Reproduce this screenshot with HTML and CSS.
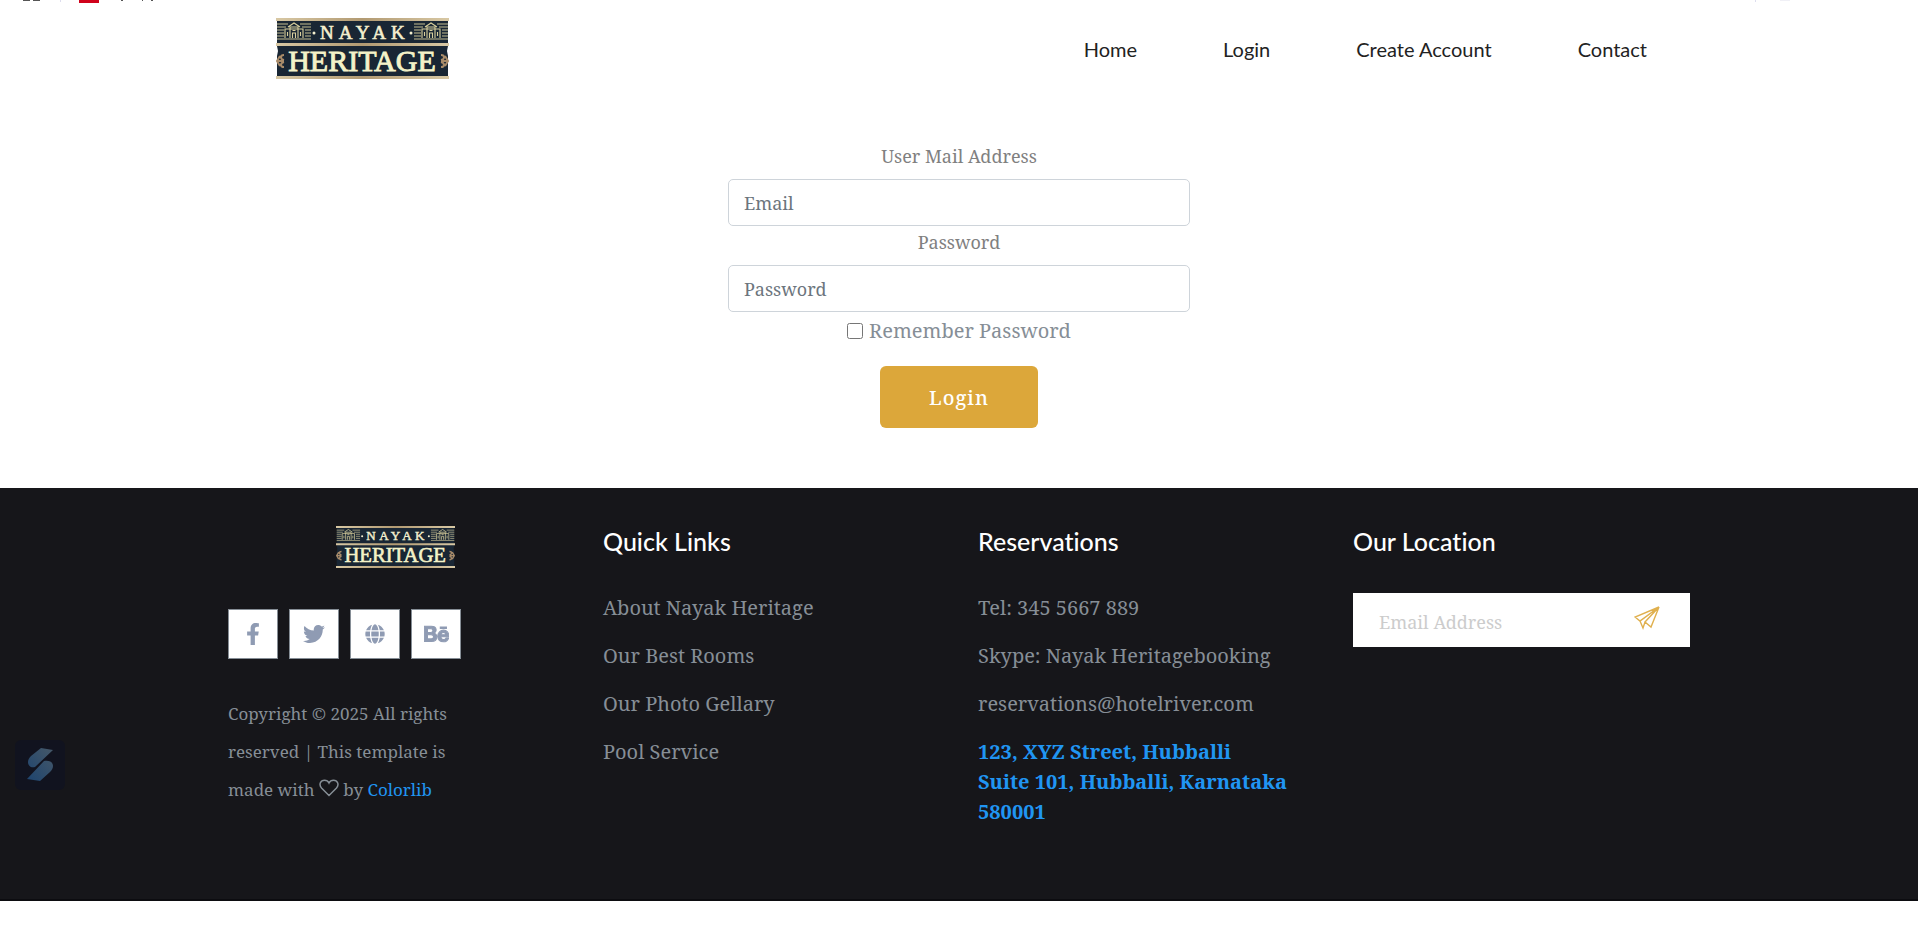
FILE: index.html
```html
<!DOCTYPE html>
<html lang="en">
<head>
<meta charset="utf-8">
<title>Nayak Heritage - Login</title>
<link rel="stylesheet" href="styles.css">
</head>
<body>
<svg class="strip" width="1800" height="4" viewBox="0 0 1800 4" aria-hidden="true">
  <path fill="#555" d="M23 0h7v1h-7zM33 0h7v1h-7zM121 0h2v1h-2zM142 0h1v1h-1zM151 0h2v1h-2z"/>
  <path fill="#dde" d="M60 0h1v2h-1zM1755 0h1v2h-1z"/>
  <path fill="#f0f0f6" d="M1780 0h10v1h-10z"/>
  <path fill="#d0021b" d="M79 0h20v3H79z"/>
</svg>
<svg width="0" height="0" class="defs" aria-hidden="true">
  <defs>
    <linearGradient id="gold" x1="0" x2="1"><stop offset="0" stop-color="#d8c8a4"/><stop offset=".5" stop-color="#b29a72"/><stop offset="1" stop-color="#d8c8a4"/></linearGradient>
    <g id="house" fill="none" stroke="#d9cf9c" stroke-width="1.1">
      <path d="M0 3h11M0 6h9M0 9h7M0 12h7M0 15h7M0 18h34M23 3h11M25 6h9M28 9h6M28 12h6M28 15h6" stroke-width=".9"/>
      <path d="M8 17V8h18v9M13 17V6h8v11M11 6l6-4 6 4M15.500 17v-5h3v5M15.500 9.500h3M10.500 11v4M23.500 11v4"/>
    </g>
    <g id="curl" fill="none" stroke="#a98b69" stroke-width="2">
      <path d="M8 1C4 1 4 5 8 6M8 13C4 13 4 9 8 8M4 2L1 7l3 5M1 7h7"/>
    </g>
    <symbol id="logo" viewBox="0 0 173 61">
      <path fill="#192634" d="M1 1h171v27l-1 5 1 5v22H1V38l1-5-1-5z"/>
      <path fill="url(#gold)" d="M0 0h173v3H0zM0 25h173v3H0zM0 58h173v3H0z"/>
      <use href="#house" x="1" y="3"/>
      <use href="#house" x="138" y="3"/>
      <use href="#curl" x="0" y="36"/>
      <use href="#curl" transform="translate(173 36) scale(-1 1)"/>
      <circle cx="38" cy="15" r="1.500" fill="#f4efcf"/><circle cx="135" cy="15" r="1.500" fill="#f4efcf"/>
      <text class="logo-top" x="44" y="21">NAYAK</text>
      <text class="logo-main" x="86" y="53" text-anchor="middle">HERITAGE</text>
    </symbol>
  </defs>
</svg>

<header class="header">
  <a class="brand" href="#" aria-label="Nayak Heritage"><svg viewBox="0 0 173 61"><use href="#logo"/></svg></a>
  <nav class="nav">
    <a href="#">Home</a>
    <a href="#">Login</a>
    <a href="#">Create Account</a>
    <a href="#">Contact</a>
  </nav>
</header>

<main>
  <form class="login">
    <label for="email">User Mail Address</label>
    <input class="field" id="email" type="email" placeholder="Email">
    <label for="password">Password</label>
    <input class="field" id="password" type="password" placeholder="Password">
    <div class="remember"><input type="checkbox" id="remember"><label for="remember">Remember Password</label></div>
    <button class="submit" type="button">Login</button>
  </form>
</main>

<footer class="footer">
  <div class="columns">
    <section class="about">
      <a class="foot-brand" href="#" aria-label="Nayak Heritage"><svg viewBox="0 0 173 61"><use href="#logo"/></svg></a>
      <div class="social">
        <a href="#" aria-label="Facebook"><svg width="14" height="22" viewBox="0 0 320 512"><path d="M279 288l14-93h-89v-60c0-25 12-50 52-50h41V7s-37-7-72-7c-73 0-121 44-121 125v70H23v93h81v224h100V288z"/></svg></a>
        <a href="#" aria-label="Twitter"><svg width="22" height="22" viewBox="0 0 512 512"><path d="M459.400 151.700c.3 4.500.3 9.100.3 13.600 0 138.700-105.600 298.600-298.600 298.600-59.500 0-114.700-17.200-161.100-47.100 8.400 1 16.600 1.300 25.300 1.300 49.100 0 94.200-16.600 130.300-44.800-46.100-1-84.800-31.200-98.100-72.800 6.500 1 13 1.600 19.800 1.600 9.400 0 18.800-1.300 27.600-3.600-48.100-9.700-84.100-52-84.100-103v-1.300c14 7.800 30.200 12.700 47.400 13.300-28.300-18.800-46.800-51-46.800-87.400 0-19.500 5.200-37.400 14.300-53 51.700 63.700 129.300 105.300 216.400 109.800-1.600-7.800-2.600-15.900-2.600-24 0-57.800 46.800-104.900 104.900-104.900 30.200 0 57.500 12.700 76.700 33.100 23.700-4.500 46.500-13.300 66.600-25.300-7.800 24.400-24.400 44.800-46.100 57.800 21.100-2.300 41.600-8.100 60.400-16.200-14.300 20.800-32.200 39.300-52.600 54.300z"/></svg></a>
        <a href="#" aria-label="Website"><svg width="20" height="20" viewBox="0 0 496 512"><path d="M336.500 160C322 70.700 287.800 8 248 8s-74 62.700-88.500 152h177zM152 256c0 22.200 1.200 43.500 3.300 64h185.300c2.100-20.500 3.300-41.800 3.300-64s-1.200-43.500-3.300-64H155.300c-2.100 20.500-3.300 41.800-3.300 64zm324.700-96c-28.600-67.900-86.500-120.400-158-141.600 24.400 33.800 41.200 84.700 50 141.600h108zM177.200 18.400C105.800 39.600 47.800 92.100 19.300 160h108c8.700-56.900 25.500-107.800 49.900-141.600zM487.400 192H372.700c2.100 21 3.300 42.500 3.300 64s-1.200 43-3.300 64h114.600c5.500-20.500 8.600-41.800 8.600-64s-3.100-43.500-8.500-64zM120 256c0-21.500 1.200-43 3.300-64H8.600C3.200 212.500 0 233.800 0 256s3.200 43.500 8.600 64h114.600c-2-21-3.200-42.500-3.200-64zm39.500 96c14.500 89.300 48.700 152 88.500 152s74-62.700 88.500-152h-177zm159.300 141.600c71.400-21.200 129.400-73.700 158-141.600h-108c-8.800 56.900-25.600 107.800-50 141.600zM19.300 352c28.600 67.900 86.500 120.400 158 141.600-24.400-33.800-41.200-84.700-50-141.600h-108z"/></svg></a>
        <a href="#" aria-label="Behance"><svg width="25" height="22" viewBox="0 0 576 512"><path stroke="#8f9bb3" stroke-width="24" d="M232 237.200c31.800-15.200 48.400-38.200 48.400-74 0-70.600-52.600-87.800-113.300-87.800H0v354.400h171.800c64.400 0 124.900-30.900 124.900-102.900 0-44.500-21.100-77.400-64.700-89.700zM77.900 135.900H151c28.100 0 53.400 7.900 53.400 40.500 0 30.100-19.700 42.200-47.500 42.200h-79v-82.700zm83.300 233.700H77.900V272h84.900c34.300 0 56 14.300 56 50.600 0 35.800-25.900 47-57.600 47zm358.500-240.700H376V94h143.700v34.900zM576 305.200c0-75.900-44.400-139.200-124.900-139.200-78.200 0-131.300 58.800-131.300 135.800 0 79.900 50.300 134.700 131.300 134.700 61.300 0 101-27.600 120.100-86.300H509c-6.700 21.900-34.300 33.500-55.700 33.500-41.300 0-63-24.200-63-65.300h185.100c.3-4.200.6-8.700.6-13.200zM390.400 274c2.300-33.700 24.700-54.800 58.500-54.800 35.400 0 53.200 20.800 56.200 54.800H390.400z"/></svg></a>
      </div>
      <p class="copyright">Copyright © 2025 All rights reserved | This template is made with <svg class="heart" width="20" height="18" viewBox="0 0 20 18" aria-hidden="true"><path d="M10 16.500L2.500 9C-.5 5.500 1.500 1.200 5.500 1.200 8 1.200 9.500 3 10 4c.5-1 2-2.800 4.500-2.800 4 0 6 4.300 3 7.800z" fill="none" stroke="#868e96" stroke-width="1.500"/></svg> by <a href="#">Colorlib</a></p>
    </section>
    <section>
      <h4>Quick Links</h4>
      <ul>
        <li><a href="#">About Nayak Heritage</a></li>
        <li><a href="#">Our Best Rooms</a></li>
        <li><a href="#">Our Photo Gellary</a></li>
        <li><a href="#">Pool Service</a></li>
      </ul>
    </section>
    <section>
      <h4>Reservations</h4>
      <ul>
        <li>Tel: 345 5667 889</li>
        <li>Skype: Nayak Heritagebooking</li>
        <li>reservations@hotelriver.com</li>
        <li><a class="address" href="#">123, XYZ Street, Hubballi<br>Suite 101, Hubballi, Karnataka<br>580001</a></li>
      </ul>
    </section>
    <section>
      <h4>Our Location</h4>
      <form class="newsletter">
        <input type="email" placeholder="Email Address" aria-label="Email Address">
        <button type="button" aria-label="Send"><svg width="26" height="24" viewBox="0 0 26 24" fill="none" stroke="#e0b04e" stroke-width="1.400"><path d="M25 1L1 11l5 4zM25 1L6 15l3 7 2-6zM25 1L11 16l6 5z"/></svg></button>
      </form>
    </section>
  </div>
  <div class="badge" aria-hidden="true"><svg width="26" height="34" viewBox="0 0 26 34"><defs><linearGradient id="blue" x1="0" y1="1" x2="1" y2="0"><stop offset="0" stop-color="#1d446f"/><stop offset="1" stop-color="#465868"/></linearGradient></defs><path fill="url(#blue)" d="M14 0l12 2L8 19C4 20 1 18 1 14c0-2 1-4 3-6zM17 13c5-1 9 1 9 5 0 2-1 4-3 6L13 33 0 31z"/></svg></div>
</footer>
</body>
</html>
```
FILE: styles.css
```css
* { box-sizing: border-box; }
body {
  margin: 0;
  background: #fff;
  color: #868e96;
  font-family: "Noto Serif", "Droid Serif", "Liberation Serif", serif;
  font-size: 20px;
  line-height: 30px;
}
a { color: #2095f2; text-decoration: none; }
input, button { font-family: inherit; }
.strip { position: absolute; top: 0; left: 0; max-width: 100%; }
.defs { position: absolute; }
.logo-top { font: 19px "Liberation Serif", serif; letter-spacing: 5px; fill: #f4efcf; stroke: #f4efcf; stroke-width: 0.6; }
.logo-main { font: 30px "Liberation Serif", serif; fill: #f4f2c8; stroke: #f4f2c8; stroke-width: 0.9; }

.header {
  max-width: 1376px;
  margin: 0 auto;
  padding: 18px 0 0 5px;
  display: flex;
  justify-content: space-between;
  align-items: center;
}
.brand svg { display: block; width: 173px; height: 61px; }
.nav { display: flex; gap: 86px; }
.nav a { color: #222; font-family: Lato, sans-serif; font-size: 20px; }

.login {
  max-width: 462px;
  margin: 0 auto;
  padding: 61px 0 60px;
  display: flex;
  flex-direction: column;
  align-items: center;
}
.login > label { color: #808080; font-size: 18px; line-height: 32px; margin-bottom: 7px; }
.field {
  width: 100%;
  height: 47px;
  padding: 0 15px;
  border: 1px solid #ced4da;
  border-radius: 5px;
  font-size: 18px;
}
.field::placeholder { color: #6c757d; opacity: 1; }
.remember { display: flex; align-items: center; gap: 6px; margin: 4px 0 20px; }
.remember input { width: 16px; height: 16px; margin: 0; }
.submit {
  width: 158px;
  height: 62px;
  border: 0;
  border-radius: 6px;
  background: #dca73a;
  color: #fff;
  font-size: 20px;
  font-weight: 500;
  letter-spacing: 1px;
}

.footer { position: relative; background: #16161a; border-bottom: 2px solid #0c0c10; }
.columns {
  max-width: 1462px;
  margin: 0 auto;
  padding: 38px 0 72px;
  display: grid;
  grid-template-columns: repeat(4, minmax(0, 1fr));
  gap: 38px;
}
h4 { margin: 0 0 37px; color: #fff; font: 500 25px/30px Lato, sans-serif; font-variant-ligatures: none; }
ul { list-style: none; margin: 0; padding: 0; display: grid; gap: 18px; }
li, li a { color: #868e96; }
li a.address { color: #2095f2; font-weight: bold; }
.foot-brand { display: block; padding-left: 108px; }
.foot-brand svg { display: block; width: 119px; height: 42px; }
.social { display: flex; gap: 11px; margin: 41px 0 36px; }
.social a {
  width: 50px;
  height: 50px;
  background: #fff;
  border: 1px solid #868e96;
  display: grid;
  place-items: center;
}
.social path { fill: #8f9bb3; }
.copyright { max-width: 240px; margin: 0; font-size: 17px; line-height: 38px; }
.heart { vertical-align: -1px; }
.newsletter { display: flex; background: #fff; height: 54px; }
.newsletter input { flex: 1; min-width: 0; border: 0; padding: 4px 0 0 26px; font-size: 18px; background: none; }
.newsletter input::placeholder { color: #ccc; opacity: 1; }
.newsletter button { border: 0; background: none; padding: 0 30px 0 0; }
.badge {
  position: absolute;
  left: 15px;
  top: 252px;
  width: 50px;
  height: 50px;
  border-radius: 6px;
  background: #11131f;
  display: grid;
  place-items: center;
}
```
